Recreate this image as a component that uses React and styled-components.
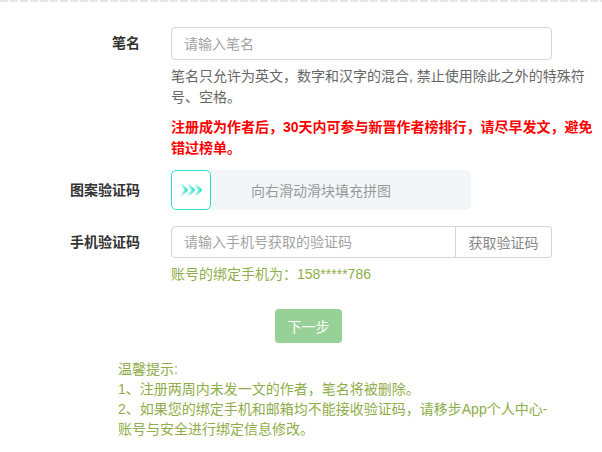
import React from 'react'
import styled, { createGlobalStyle } from 'styled-components'

const Global = createGlobalStyle`
  body {
    margin: 0;
    background: #fff;
    font-family: "Liberation Sans", "Noto Sans CJK SC", sans-serif;
    font-size: 14px;
    color: #333;
  }
`

const TopRule = styled.div`
  height: 2px;
  background: repeating-linear-gradient(90deg, #e6e6e6 0 8px, transparent 8px 10px);
`

const Page = styled.div`
  padding-top: 25px;
`

const Field = styled.div`
  display: grid;
  grid-template-columns: 140px 425px;
  column-gap: 31px;
  margin-top: ${p => p.gap || 0}px;
`

const Label = styled.label`
  text-align: right;
  font-weight: bold;
  color: #333;
  line-height: ${p => p.h}px;
  white-space: nowrap;
`

const Input = styled.input`
  box-sizing: border-box;
  width: ${p => p.w}px;
  height: ${p => p.h}px;
  padding: 0 12px;
  border: 1px solid #d4d4d4;
  border-radius: ${p => (p.joined ? '4px 0 0 4px' : '4px')};
  font: inherit;
  color: #333;
  outline: none;
  &::placeholder {
    color: #a3a3a3;
  }
`

const Help = styled.p`
  margin: ${p => p.top}px 0 0;
  line-height: 21px;
  color: ${p => (p.warn ? '#ff0000' : '#666')};
  font-weight: ${p => (p.warn ? 'bold' : 'normal')};
`

const Slider = styled.div`
  position: relative;
  width: 300px;
  height: 40px;
  border-radius: 6px;
  background: #f2f6f9;
  display: flex;
  align-items: center;
  justify-content: center;
  color: #999;
`

const Handle = styled.div`
  position: absolute;
  left: 0;
  top: 0;
  box-sizing: border-box;
  width: 40px;
  height: 40px;
  border: 1px solid #2ee0cf;
  border-radius: 5px;
  background: #fff;
  display: flex;
  align-items: center;
  justify-content: center;
`

const Group = styled.div`
  display: flex;
  width: 381px;
`

const CodeButton = styled.button`
  box-sizing: border-box;
  width: 96px;
  height: 32px;
  border: 1px solid #d4d4d4;
  border-left: none;
  border-radius: 0 4px 4px 0;
  background: #fff;
  font: inherit;
  color: #888;
  padding: 0;
`

const Note = styled.div`
  margin-top: 6px;
  line-height: 20px;
  color: #8fad4a;
`

const Next = styled.button`
  display: block;
  margin: 25px 0 0 275px;
  width: 67px;
  height: 34px;
  border: none;
  border-radius: 4px;
  background: #97d197;
  color: #fff;
  font: inherit;
  padding: 0;
`

const Tips = styled.div`
  margin: 16px 0 0 118px;
  width: 440px;
  line-height: 20px;
  color: #8fad4a;
`

const Arrows = () => (
  <svg width="24" height="14" viewBox="0 0 24 14">
    <defs>
      <linearGradient id="arr" x1="0" x2="1" y1="0" y2="0">
        <stop offset="0" stopColor="#2ee0cf" stopOpacity="0.1" />
        <stop offset="1" stopColor="#2ee0cf" stopOpacity="1" />
      </linearGradient>
    </defs>
    <g fill="none" stroke="url(#arr)" strokeWidth="2.6" strokeLinejoin="miter">
      <polyline points="2,1.5 7.5,7 2,12.5" />
      <polyline points="9,1.5 14.5,7 9,12.5" />
      <polyline points="16,1.5 21.5,7 16,12.5" />
    </g>
  </svg>
)

export default function App() {
  return (
    <>
      <Global />
      <TopRule />
      <Page>
        <Field>
          <Label h={33}>笔名</Label>
          <div>
            <Input w={381} h={33} placeholder="请输入笔名" />
            <Help top={6}>笔名只允许为英文，数字和汉字的混合, 禁止使用除此之外的特殊符号、空格。</Help>
            <Help top={9} warn>
              注册成为作者后，30天内可参与新晋作者榜排行，请尽早发文，避免错过榜单。
            </Help>
          </div>
        </Field>
        <Field gap={11}>
          <Label h={40}>图案验证码</Label>
          <Slider>
            <Handle>
              <Arrows />
            </Handle>
            向右滑动滑块填充拼图
          </Slider>
        </Field>
        <Field gap={16}>
          <Label h={32}>手机验证码</Label>
          <div>
            <Group>
              <Input w={285} h={32} joined placeholder="请输入手机号获取的验证码" />
              <CodeButton>获取验证码</CodeButton>
            </Group>
            <Note>账号的绑定手机为：158*****786</Note>
          </div>
        </Field>
        <Next>下一步</Next>
        <Tips>
          温馨提示:
          <br />
          1、注册两周内未发一文的作者，笔名将被删除。
          <br />
          2、如果您的绑定手机和邮箱均不能接收验证码，请移步App个人中心-账号与安全进行绑定信息修改。
        </Tips>
      </Page>
    </>
  )
}
